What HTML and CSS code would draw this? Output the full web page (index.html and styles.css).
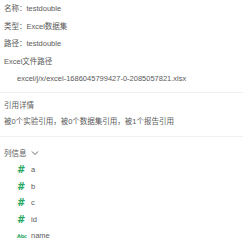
FILE: index.html
```html
<!DOCTYPE html>
<html lang="zh">
<head>
<meta charset="utf-8">
<link rel="stylesheet" href="styles.css">
</head>
<body>
<div class="panel">
  <section class="info">
    <div class="row">名称：testdouble</div>
    <div class="row">类型：Excel数据集</div>
    <div class="row">路径：testdouble</div>
    <div class="row">Excel文件路径</div>
    <div class="row indent">excel/j/x/excel-1686045799427-0-2085057821.xlsx</div>
  </section>
  <section class="refs">
    <div class="row2">引用详情</div>
    <div class="row2">被0个实验引用，被0个数据集引用，被1个报告引用</div>
  </section>
  <section class="cols">
    <div class="col-head">列信息
      <svg class="chev" width="8" height="6" viewBox="0 0 8 6"><path d="M1 1.5 L4 4.5 L7 1.5" fill="none" stroke="#666" stroke-width="1"/></svg>
    </div>
    <div class="col-row"><span class="ico hash">#</span><span>a</span></div>
    <div class="col-row"><span class="ico hash">#</span><span>b</span></div>
    <div class="col-row"><span class="ico hash">#</span><span>c</span></div>
    <div class="col-row"><span class="ico hash">#</span><span>id</span></div>
    <div class="col-row"><span class="ico abc">Abc</span><span>name</span></div>
  </section>
</div>
</body>
</html>
```
FILE: styles.css
```css
html, body {
  margin: 0;
  padding: 0;
  background: #fff;
}
body {
  font-family: "Liberation Sans", "Noto Sans CJK SC", sans-serif;
  font-size: 7.5px;
  color: #5a5a5a;
}
.panel {
  width: 243px;
}
.info {
  padding-left: 4px;
  padding-bottom: 4px;
  border-bottom: 1px solid #f0f0f0;
}
.row {
  height: 17.5px;
  line-height: 17.5px;
  white-space: nowrap;
}
.indent {
  padding-left: 13px;
}
.refs {
  padding: 5px 0 5px 4px;
  border-bottom: 1px solid #f0f0f0;
}
.row2 {
  height: 16.5px;
  line-height: 16.5px;
  white-space: nowrap;
}
.cols {
  padding: 8px 0 0 4px;
}
.col-head {
  height: 17.5px;
  line-height: 17.5px;
  display: flex;
  align-items: center;
  gap: 4px;
}
.chev {
  display: block;
}
.col-row {
  height: 16.5px;
  display: flex;
  align-items: center;
  padding-left: 13px;
  line-height: 16.5px;
}
.ico {
  color: #2aa863;
  font-weight: bold;
  width: 14px;
  flex: none;
}
.hash {
  font-size: 10px;
  font-family: "DejaVu Sans", sans-serif;
  font-style: italic;
}
.abc {
  font-size: 5px;
  letter-spacing: -0.2px;
  font-family: "DejaVu Sans", sans-serif;
}
```
